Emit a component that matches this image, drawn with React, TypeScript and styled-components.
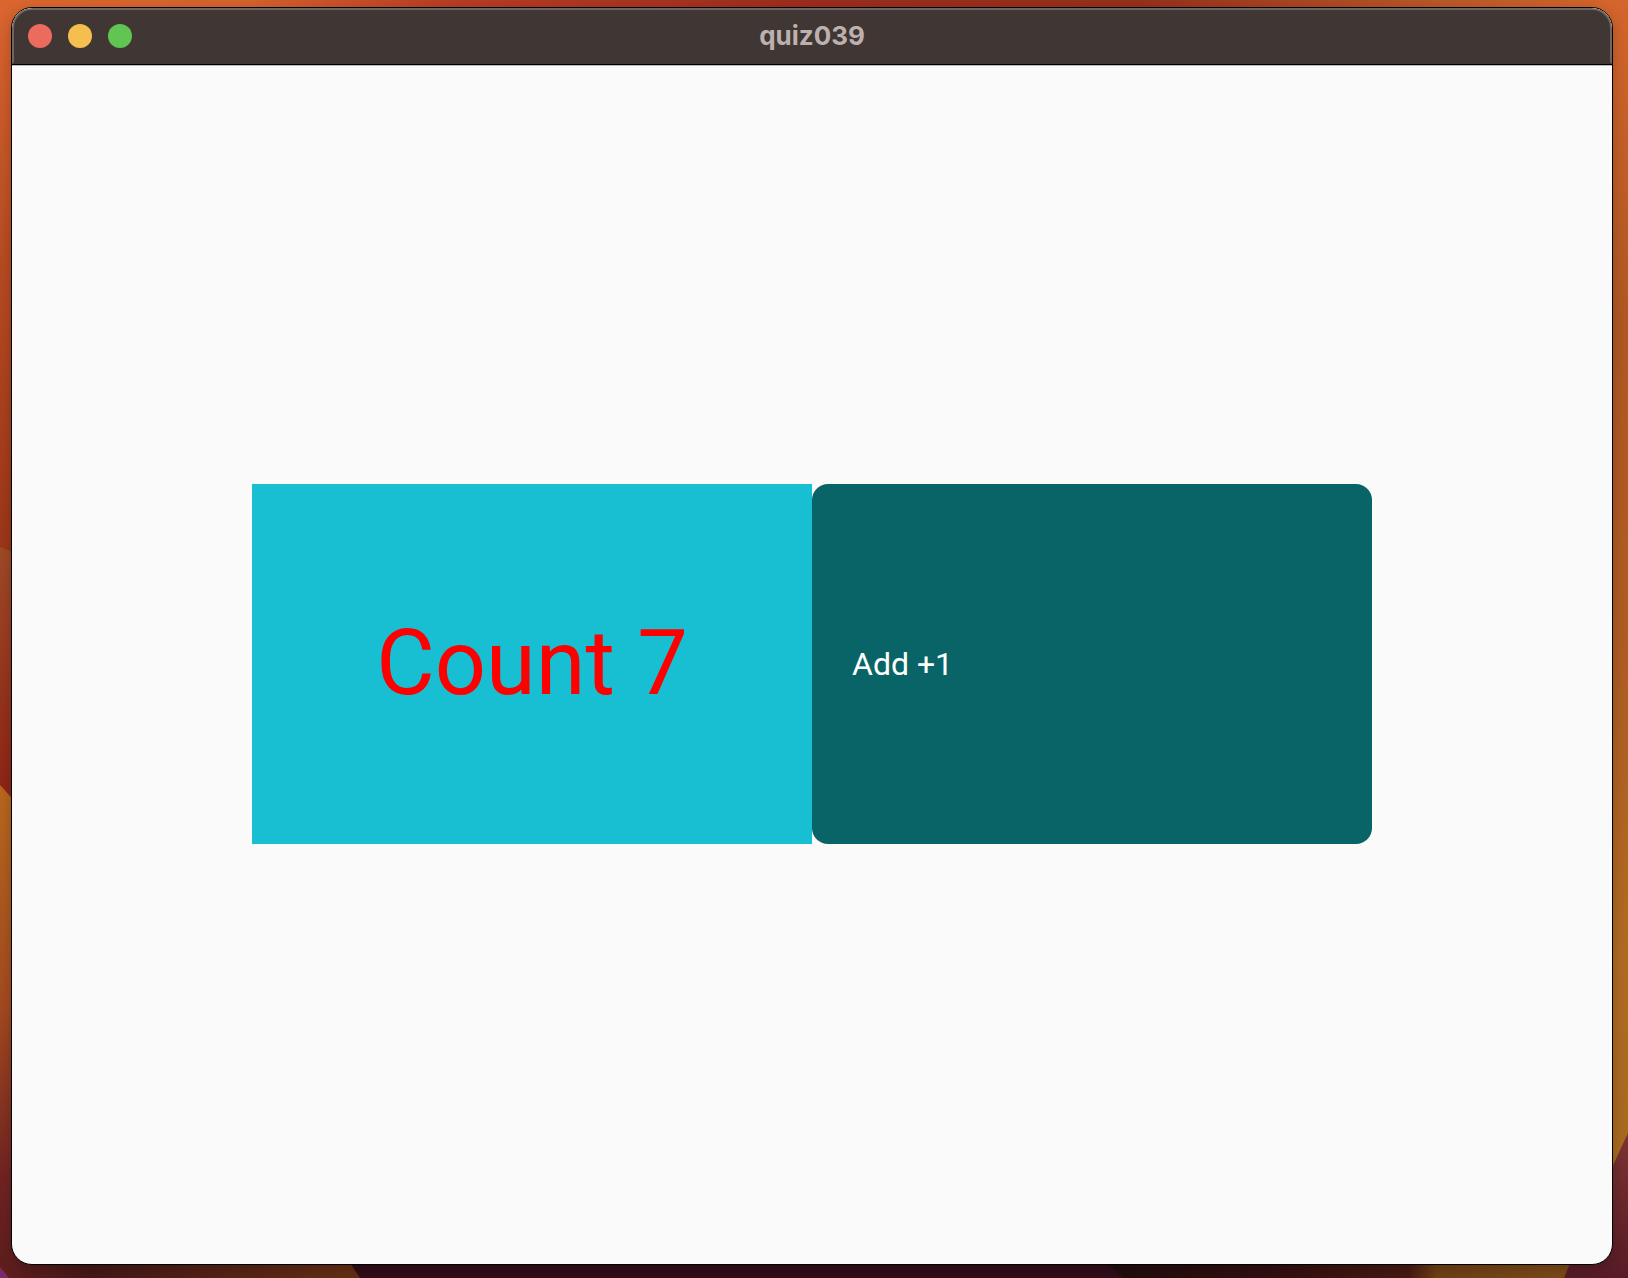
import React, { useState } from "react";
import styled, { createGlobalStyle } from "styled-components";

const GlobalStyle = createGlobalStyle`
  *, *::before, *::after { box-sizing: border-box; }
  body { margin: 0; }
`;

const Desktop = styled.div`
  position: relative;
  display: flex;
  min-height: 100vh;
  padding: 7px 15px 13px 11px;
  background: #7a2a1c;
`;

const WallpaperArt = styled.svg`
  position: absolute;
  inset: 0;
  width: 100%;
  height: 100%;
`;

const AppWindow = styled.main`
  position: relative;
  display: flex;
  flex: 1;
  flex-direction: column;
  overflow: hidden;
  border: 1px solid #000;
  border-radius: 21px;
  background: #fafafa;
  box-shadow: 0 4px 14px rgba(0, 0, 0, 0.22);
`;

const TitleBar = styled.header`
  display: grid;
  grid-template-columns: 1fr auto 1fr;
  align-items: center;
  height: 56px;
  padding: 0 14px;
  border: 2px solid #6f6663;
  border-bottom-color: #403735;
  border-radius: 20px 20px 0 0;
  background: #403735;
`;

const WindowControls = styled.div`
  display: flex;
  gap: 16px;
`;

const ControlDot = styled.button<{ $color: string }>`
  width: 24px;
  height: 24px;
  padding: 0;
  border: 0;
  border-radius: 50%;
  background: ${({ $color }) => $color};
`;

const Title = styled.h1`
  margin: 0;
  color: #bcb1af;
  font: 700 26px/32px Inter, sans-serif;
`;

const Content = styled.section`
  display: flex;
  flex: 1;
  flex-direction: column;
  align-items: center;
  justify-content: center;
  box-shadow: inset 0 1px #000, inset 0 2px #b9b9b9;
`;

const Counter = styled.div`
  display: grid;
  grid-template-columns: 1fr 1fr;
  width: 70%;
  min-height: 360px;
`;

const CountLabel = styled.output`
  display: flex;
  align-items: center;
  justify-content: center;
  background: #18bed1;
  color: #ff0000;
  font: 400 90px/108px Roboto, sans-serif;
`;

const AddButton = styled.button`
  padding: 0 40px;
  border: 0;
  border-radius: 16px;
  background: #086466;
  color: #fff;
  font: 400 32px/38px Roboto, sans-serif;
  text-align: left;
  cursor: pointer;
`;

const controls = [
  { name: "Close", color: "#ed6a5e" },
  { name: "Minimize", color: "#f5bf4f" },
  { name: "Zoom", color: "#61c554" },
];

function Wallpaper() {
  return (
    <WallpaperArt viewBox="0 0 1628 1278" preserveAspectRatio="none" aria-hidden="true">
      <defs>
        <linearGradient id="top">
          <stop offset="0" stopColor="#da662f" />
          <stop offset="0.15" stopColor="#d6632d" />
          <stop offset="0.28" stopColor="#b83c24" />
          <stop offset="0.5" stopColor="#9c2c1d" />
          <stop offset="0.7" stopColor="#96301c" />
          <stop offset="0.88" stopColor="#b95727" />
          <stop offset="1" stopColor="#d6662c" />
        </linearGradient>
        <linearGradient id="left" x2="0" y2="1">
          <stop offset="0" stopColor="#da662f" />
          <stop offset="0.2" stopColor="#b84c22" />
          <stop offset="0.43" stopColor="#9c3619" />
        </linearGradient>
        <linearGradient id="leftWave" x2="0" y2="1">
          <stop offset="0" stopColor="#a04a27" />
          <stop offset="1" stopColor="#8a1c11" />
        </linearGradient>
        <linearGradient id="leftGold" x2="0" y2="1">
          <stop offset="0" stopColor="#b9681f" />
          <stop offset="0.45" stopColor="#a34a20" />
          <stop offset="0.8" stopColor="#702322" />
          <stop offset="1" stopColor="#5c1d1d" />
        </linearGradient>
        <linearGradient id="right" x2="0" y2="1">
          <stop offset="0" stopColor="#d4652c" />
          <stop offset="0.25" stopColor="#b05822" />
          <stop offset="0.5" stopColor="#b05c23" />
          <stop offset="0.75" stopColor="#b06b22" />
          <stop offset="0.88" stopColor="#a96a20" />
        </linearGradient>
        <linearGradient id="bottom">
          <stop offset="0" stopColor="#5c1d1d" />
          <stop offset="0.2" stopColor="#451717" />
          <stop offset="0.9" stopColor="#642d14" />
        </linearGradient>
        <linearGradient id="bottomGold">
          <stop offset="0" stopColor="#1e0c0b" />
          <stop offset="0.4" stopColor="#350f10" />
          <stop offset="0.66" stopColor="#471a12" />
          <stop offset="0.72" stopColor="#6f4016" />
          <stop offset="1" stopColor="#7d4a18" />
        </linearGradient>
        <linearGradient id="rightWine" x2="0" y2="1">
          <stop offset="0" stopColor="#7c3430" />
          <stop offset="1" stopColor="#581b26" />
        </linearGradient>
      </defs>
      <rect width="1628" height="30" fill="url(#top)" />
      <rect y="0" width="30" height="1278" fill="url(#left)" />
      <path d="M0 547 Q15 552 30 562 V850 H0Z" fill="url(#leftWave)" />
      <path d="M0 785 L30 818 V1278 H0Z" fill="url(#leftGold)" />
      <rect x="1598" width="30" height="1278" fill="url(#right)" />
      <rect x="20" y="1250" width="360" height="28" fill="url(#bottom)" />
      <path d="M344 1254 L360 1278 H1130 L1096 1254Z" fill="#300d19" />
      <path d="M1096 1254 L1124 1278 H1570 V1240 H1096Z" fill="url(#bottomGold)" />
      <path d="M1628 1133 Q1585 1225 1564 1278 H1628Z" fill="url(#rightWine)" />
      <path d="M0 1267 L9 1278 H0Z" fill="#7b286b" />
    </WallpaperArt>
  );
}

export default function App() {
  const [count, setCount] = useState(7);
  return (
    <>
      <GlobalStyle />
      <Desktop>
        <Wallpaper />
        <AppWindow>
          <TitleBar>
            <WindowControls>
              {controls.map(({ name, color }) => (
                <ControlDot key={name} type="button" aria-label={name} $color={color} />
              ))}
            </WindowControls>
            <Title>quiz039</Title>
          </TitleBar>
          <Content>
            <Counter>
              <CountLabel>Count {count}</CountLabel>
              <AddButton type="button" onClick={() => setCount(count + 1)}>
                Add +1
              </AddButton>
            </Counter>
          </Content>
        </AppWindow>
      </Desktop>
    </>
  );
}
